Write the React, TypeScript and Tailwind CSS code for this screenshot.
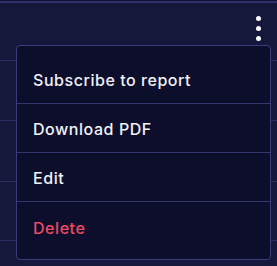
import React from 'react';

const items = [
  { label: 'Subscribe to report', danger: false },
  { label: 'Download PDF', danger: false },
  { label: 'Edit', danger: false },
  { label: 'Delete', danger: true },
];

export default function App() {
  return (
    <div
      className="relative w-[277px] h-[266px] overflow-hidden bg-[#0f1130] pt-px"
      style={{ fontFamily: 'Inter, "Open Sans", sans-serif' }}
    >
      <div className="h-full border-t-2 border-[#2e3270] bg-[#15183a]">
        {/* header row with the kebab button */}
        <div className="h-[58px] border-b border-[#2a2d5e] flex justify-end items-start pt-[13px] pr-[15px]">
          <button className="w-[8px] flex flex-col items-center gap-[5px]">
            <span className="block w-[5px] h-[5px] rounded-full bg-white" />
            <span className="block w-[5px] h-[5px] rounded-full bg-white" />
            <span className="block w-[5px] h-[5px] rounded-full bg-white" />
          </button>
        </div>
        <div className="h-[60px] border-b border-[#2a2d5e]" />
        <div className="h-[61px] border-b border-[#2a2d5e]" />
        <div className="h-[59px] border-b border-[#2a2d5e]" />
      </div>

      {/* dropdown menu */}
      <div className="absolute left-[16px] top-[45px] w-[255px] rounded-[4px] border border-[#393d7c] bg-[#0c0e2c] pt-[9px] pb-[8px]">
        {items.map((item, i) => (
          <div
            key={item.label}
            className={
              'h-[49px] flex items-center px-[16px] pt-[2px] text-[16px] font-medium tracking-[0.55px] ' +
              (i < items.length - 1 ? 'border-b border-[#33376f] ' : '') +
              (item.danger ? 'text-[#ec4a63]' : 'text-[#f2f2f7]')
            }
          >
            {item.label}
          </div>
        ))}
      </div>
    </div>
  );
}
